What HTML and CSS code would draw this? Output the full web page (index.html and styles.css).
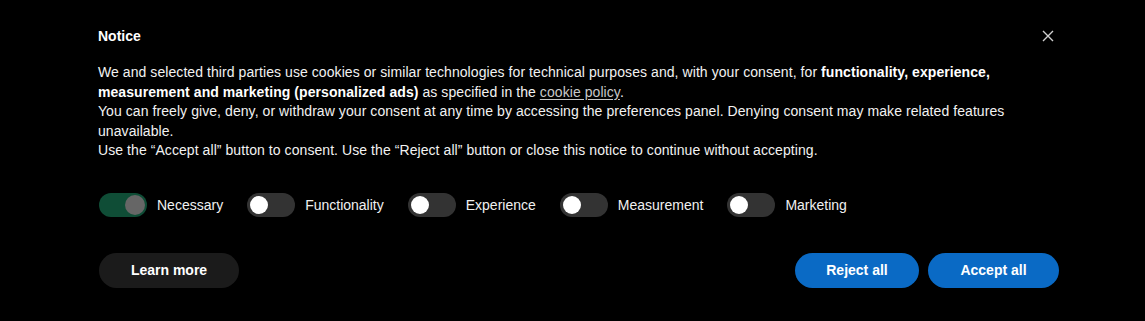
FILE: index.html
```html
<!DOCTYPE html>
<html lang="en">
<head>
<meta charset="utf-8">
<title>Notice</title>
<link rel="stylesheet" href="styles.css">
</head>
<body>
<div class="banner">
  <div class="header">
    <h2 class="title">Notice</h2>
    <button class="close" aria-label="Close">
      <svg width="12" height="12" viewBox="0 0 12 12"><path d="M1 1 L11 11 M11 1 L1 11" stroke="#d0d0d0" stroke-width="1.4" fill="none"/></svg>
    </button>
  </div>
  <div class="text">
    <p>We and selected third parties use cookies or similar technologies for technical purposes and, with your consent, for <b>functionality, experience, measurement and marketing (personalized ads)</b> as specified in the <a href="#">cookie policy</a>.</p>
    <p>You can freely give, deny, or withdraw your consent at any time by accessing the preferences panel. Denying consent may make related features unavailable.</p>
    <p>Use the “Accept all” button to consent. Use the “Reject all” button or close this notice to continue without accepting.</p>
  </div>
  <div class="toggles">
    <label class="tg"><span class="switch on"><span class="knob"></span></span><span class="lbl">Necessary</span></label>
    <label class="tg"><span class="switch"><span class="knob"></span></span><span class="lbl">Functionality</span></label>
    <label class="tg"><span class="switch"><span class="knob"></span></span><span class="lbl">Experience</span></label>
    <label class="tg"><span class="switch"><span class="knob"></span></span><span class="lbl">Measurement</span></label>
    <label class="tg"><span class="switch"><span class="knob"></span></span><span class="lbl">Marketing</span></label>
  </div>
  <div class="actions">
    <button class="btn dark">Learn more</button>
    <div class="right">
      <button class="btn blue reject">Reject all</button>
      <button class="btn blue accept">Accept all</button>
    </div>
  </div>
</div>
</body>
</html>
```

FILE: styles.css
```css
html, body {
  margin: 0;
  padding: 0;
  background: #000;
  height: 100%;
}
body {
  font-family: "Liberation Sans", Arial, Helvetica, sans-serif;
  color: #fff;
  font-size: 14px;
}
.banner {
  padding: 26px 86px 0 98px;
}
.header {
  display: flex;
  justify-content: space-between;
  align-items: center;
  height: 20px;
}
.title {
  margin: 0;
  font-size: 14px;
  font-weight: bold;
  line-height: 20px;
}
.close {
  background: none;
  border: 0;
  padding: 0;
  margin-right: 5px;
  width: 12px;
  height: 12px;
  display: flex;
  cursor: pointer;
}
.text {
  margin-top: 17px;
  line-height: 19.5px;
  color: #f2f2f2;
  letter-spacing: 0.07px;
}
.text p {
  margin: 0;
}
.text b {
  color: #fff;
}
.text a {
  color: #c8c8c8;
  text-decoration: underline;
  text-underline-offset: 2px;
}
.toggles {
  display: flex;
  align-items: center;
  gap: 24px;
  margin-top: 32px;
  padding-left: 1px;
}
.tg {
  display: flex;
  align-items: center;
  gap: 10px;
}
.switch {
  width: 48px;
  height: 24px;
  border-radius: 12px;
  background: #333;
  position: relative;
  display: block;
}
.switch .knob {
  position: absolute;
  top: 3px;
  left: 3px;
  width: 18px;
  height: 18px;
  border-radius: 50%;
  background: #fff;
}
.switch.on {
  background: #0f4d36;
}
.switch.on .knob {
  left: auto;
  right: 2px;
  top: 2px;
  width: 20px;
  height: 20px;
  background: #666;
}
.lbl {
  color: #f0f0f0;
  font-size: 14px;
}
.actions {
  display: flex;
  justify-content: space-between;
  align-items: center;
  margin-top: 36px;
  padding-left: 1px;
}
.right {
  display: flex;
  gap: 9px;
}
.btn {
  font-family: "Liberation Sans", Arial, Helvetica, sans-serif;
  font-size: 14px;
  font-weight: bold;
  color: #fff;
  border: 0;
  height: 35px;
  border-radius: 18px;
  padding: 0;
  cursor: pointer;
}
.btn.dark {
  background: #1b1b1b;
  width: 140px;
}
.btn.blue {
  background: #0a6ac5;
}
.btn.reject {
  width: 124px;
}
.btn.accept {
  width: 131px;
}
```
